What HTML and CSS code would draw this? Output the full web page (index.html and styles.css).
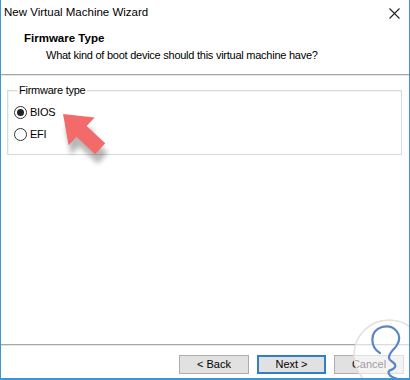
FILE: index.html
```html
<!DOCTYPE html>
<html lang="en">
<head>
    <meta charset="UTF-8">
    <title>New Virtual Machine Wizard</title>
    <link rel="stylesheet" href="styles.css">
</head>
<body>
    <div class="window">
        <div class="titlebar">
            <span class="title">New Virtual Machine Wizard</span>
            <svg class="close" width="11" height="11" viewBox="0 0 11 11">
                <path d="M0.5 0.5 L10.5 10.5 M10.5 0.5 L0.5 10.5" stroke="#222" stroke-width="1.1" fill="none"/>
            </svg>
        </div>

        <div class="header">
            <div class="heading">Firmware Type</div>
            <div class="subheading">What kind of boot device should this virtual machine have?</div>
        </div>
        <div class="separator"></div>

        <div class="content">
            <fieldset class="group">
                <legend>Firmware type</legend>
                <label class="radio-row">
                    <span class="radio checked"></span>
                    <span>BIOS</span>
                </label>
                <label class="radio-row">
                    <span class="radio"></span>
                    <span>EFI</span>
                </label>
            </fieldset>
        </div>

        <div class="footer">
            <div class="separator"></div>
            <div class="buttons">
                <button class="btn">&lt; Back</button>
                <button class="btn default">Next &gt;</button>
                <button class="btn">Cancel</button>
            </div>
        </div>

        <!-- pointer arrow over the BIOS option -->
        <svg class="arrow" width="80" height="70" viewBox="0 0 80 70">
            <defs>
                <filter id="blur" x="-30%" y="-30%" width="160%" height="160%">
                    <feGaussianBlur stdDeviation="2.5"/>
                </filter>
            </defs>
            <g transform="translate(14 2) rotate(-47) scale(1.06)">
                <polygon points="-4,4 14,26 6,26 6,50 -8,50 -8,26 -19,26" fill="#000" opacity="0.28" filter="url(#blur)" transform="translate(-4 6)"/>
                <polygon points="0,0 18,24 7,24 7,48 -7,48 -7,24 -18,24" fill="#f36a6a"/>
            </g>
        </svg>

        <!-- watermark -->
        <svg class="watermark" width="72" height="72" viewBox="0 0 72 72">
            <circle cx="38" cy="38" r="35" fill="#ffffff" fill-opacity="0.6" stroke="#e0e0e0" stroke-width="1.5"/>
            <path d="M29 36 C19 30 18 14 31 10 C44 7 52 18 46 28 C43 33 38 35 38 41 C38 45 46 45 44 50 C42 54 36 52 38 57 C40 62 48 60 50 65"
                  stroke="#5a86c6" stroke-width="2.2" fill="none" stroke-linecap="round"/>
        </svg>
    </div>
</body>
</html>
```

FILE: styles.css
```css
body {
    margin: 0;
    font-family: "Liberation Sans", Arial, sans-serif;
    font-size: 11px;
    letter-spacing: -0.25px;
    color: #000;
    background-color: #fff;
}
.window {
    position: relative;
    width: 408px;
    height: 378px;
    border-left: 1px solid #3c96d2;
    border-right: 1px solid #3c96d2;
    border-bottom: 2px solid #3c96d2;
    display: flex;
    flex-direction: column;
    overflow: hidden;
}
.titlebar {
    height: 24px;
    display: flex;
    align-items: center;
    justify-content: space-between;
    padding: 0 9px 0 3px;
}
.title {
    font-size: 11.5px;
    letter-spacing: 0;
}
.close {
    margin-top: 2px;
}
.header {
    padding: 6px 0 11px 23px;
}
.heading {
    font-size: 11.5px;
    font-weight: bold;
    letter-spacing: 0;
    line-height: 16px;
}
.subheading {
    line-height: 16px;
    margin-top: 1px;
    padding-left: 22px;
}
.separator {
    height: 1px;
    background-color: #a8a8a8;
    border-bottom: 1px solid #e4e4e4;
}
.content {
    flex: 1;
    padding: 6px 7px 0 6px;
}
.group {
    margin: 0;
    padding: 3px 6px 9px 6px;
    border: 1px solid #d9d9d9;
    box-shadow: inset 1px 1px 0 #f4f4f4;
}
.group legend {
    padding: 0 2px;
    margin-left: 3px;
    line-height: 16px;
}
.radio-row {
    display: flex;
    align-items: center;
    height: 22px;
    gap: 3px;
}
.radio {
    width: 11px;
    height: 11px;
    border: 1px solid #333;
    border-radius: 50%;
    display: flex;
    align-items: center;
    justify-content: center;
}
.radio.checked::after {
    content: "";
    width: 7px;
    height: 7px;
    border-radius: 50%;
    background-color: #222;
}
.footer {
    padding-bottom: 4px;
}
.buttons {
    display: flex;
    justify-content: flex-end;
    gap: 8px;
    padding: 9px 5px 0 0;
}
.btn {
    width: 70px;
    height: 19px;
    font-family: inherit;
    font-size: 11px;
    letter-spacing: 0;
    line-height: 15px;
    padding: 0;
    background-color: #e1e1e1;
    border: 1px solid #adadad;
    color: #000;
}
.btn.default {
    border: 2px solid #2f7fd0;
    width: 69px;
}
.arrow {
    position: absolute;
    left: 48px;
    top: 112px;
}
.watermark {
    position: absolute;
    left: 350px;
    top: 317px;
}
```
